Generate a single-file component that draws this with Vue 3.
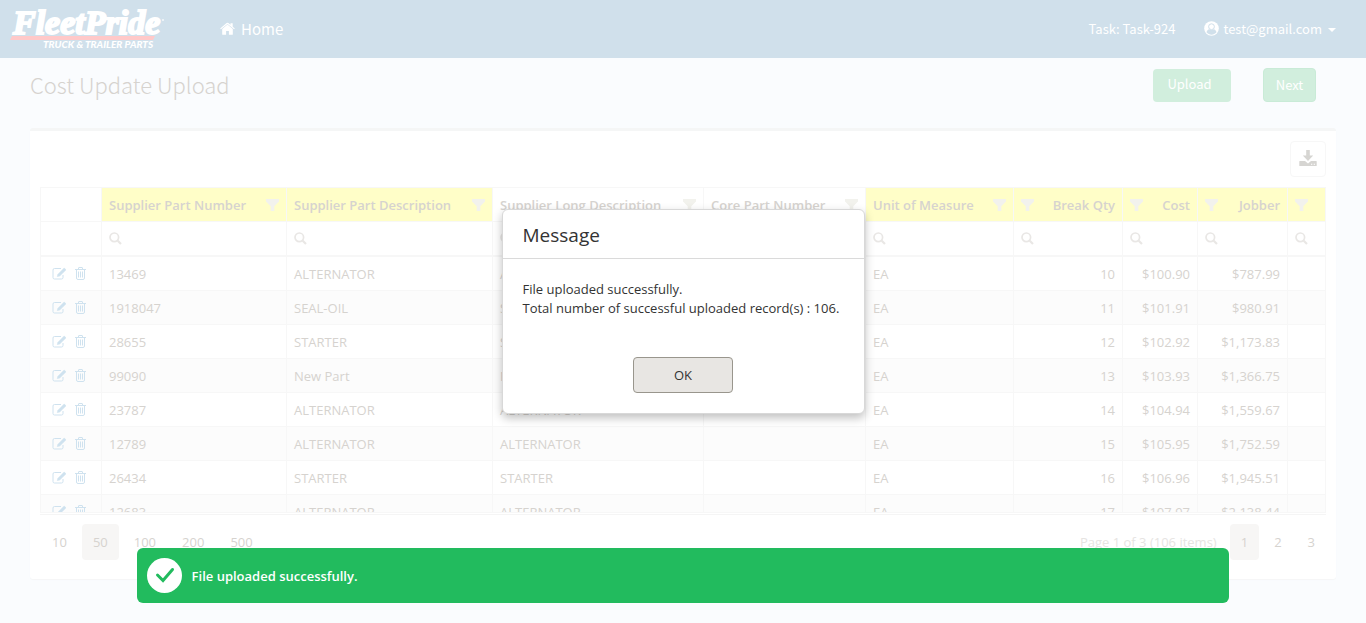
<script setup>
const columns = [
  { label: '', width: 61, hl: false, actions: true },
  { label: 'Supplier Part Number', key: 'part', width: 185, hl: true },
  { label: 'Supplier Part Description', key: 'desc', width: 206, hl: true },
  { label: 'Supplier Long Description', key: 'long', width: 211, hl: false },
  { label: 'Core Part Number', key: 'core', width: 162, hl: false },
  { label: 'Unit of Measure', key: 'uom', width: 148, hl: true },
  { label: 'Break Qty', key: 'qty', width: 109, hl: true, right: true },
  { label: 'Cost', key: 'cost', width: 75, hl: true, right: true },
  { label: 'Jobber', key: 'jobber', width: 90, hl: true, right: true },
  { label: '', key: 'extra', width: 38, hl: true, right: true },
]

const rows = [
  ['13469', 'ALTERNATOR', '10', '$100.90', '$787.99'],
  ['1918047', 'SEAL-OIL', '11', '$101.91', '$980.91'],
  ['28655', 'STARTER', '12', '$102.92', '$1,173.83'],
  ['99090', 'New Part', '13', '$103.93', '$1,366.75'],
  ['23787', 'ALTERNATOR', '14', '$104.94', '$1,559.67'],
  ['12789', 'ALTERNATOR', '15', '$105.95', '$1,752.59'],
  ['26434', 'STARTER', '16', '$106.96', '$1,945.51'],
  ['12683', 'ALTERNATOR', '17', '$107.97', '$2,138.44'],
].map(([part, desc, qty, cost, jobber]) => ({
  part, desc, long: desc, core: '', uom: 'EA', qty, cost, jobber, extra: '',
}))

const pageSizes = [10, 50, 100, 200, 500]
const pages = [1, 2, 3]
</script>

<template>
  <div class="app">
    <header class="topbar">
      <a class="logo" href="#" aria-label="FleetPride Truck &amp; Trailer Parts">
        <svg width="160" height="48" viewBox="0 0 160 48">
          <text class="logo-name" x="3" y="29">FleetPride</text>
          <path d="M2 31H145L143 35H0Z" fill="#ffc9c9" />
          <text class="logo-tag" x="33" y="43">TRUCK &amp; TRAILER PARTS</text>
          <circle cx="153" cy="15" r="1" fill="#f4f8fb" />
        </svg>
      </a>
      <a class="home" href="#">
        <svg width="15" height="13" viewBox="0 0 15 13" fill="#fff">
          <path d="M7.500 2.600 2.200 7v5.200q0 .5.500.5H6.100V9h2.800v3.700h3.400q.5 0 .5-.500V7Z" />
          <path d="M.2 6.500 6.600 1q.9-.7 1.800 0L10.500 2.800V1.200h2.200v3.500l2.100 1.800-.7.800L7.500 1.900.9 7.300Z" />
        </svg>
        <span>Home</span>
      </a>
      <span class="task">Task: Task-924</span>
      <button class="user" type="button">
        <svg width="15" height="15" viewBox="0 0 15 15">
          <circle cx="7.500" cy="7.500" r="7.300" fill="#fff" />
          <circle cx="7.500" cy="5.700" r="2.900" fill="none" stroke="#d0e0eb" stroke-width="1" />
          <path d="M2.500 11.300C3 9.400 4 8.700 5.200 8.300q2.300 1.400 4.600 0c1.200.4 2.200 1.100 2.700 3C9.800 14.400 5.200 14.400 2.500 11.300Z" fill="#d0e0eb" />
        </svg>
        <span>test@gmail.com</span>
        <svg class="caret" width="8" height="4" viewBox="0 0 8 4"><path d="M0 0H8L4 4Z" fill="#fff" /></svg>
      </button>
    </header>

    <div class="titlebar">
      <h1>Cost Update Upload</h1>
      <button class="btn upload" type="button">Upload</button>
      <button class="btn next" type="button">Next</button>
    </div>

    <main class="panel">
      <div class="toolbar">
        <button class="export" type="button" aria-label="Export">
          <svg width="18" height="17" viewBox="0 0 18 17" fill="#d6d5d2">
            <path d="M7.200 0h3.600v5.500h3.400L9 11 3.800 5.500h3.400Z" />
            <path d="M.8 11H6l3 2.500L12 11h5.200q.5 0 .5.500v4q0 .5-.5.500H.8q-.5 0-.5-.500v-4Q.3 11 .8 11Z" />
            <path d="M12 13.700h1.300v1H12Zm2.700 0H16v1h-1.300Z" fill="#fff" />
          </svg>
        </button>
      </div>

      <div class="grid">
        <div class="rows">
          <table>
            <colgroup>
              <col v-for="(c, i) in columns" :key="i" :style="{ width: c.width + 'px' }" />
            </colgroup>
            <thead>
              <tr>
                <th v-for="(c, i) in columns" :key="i" :class="{ hl: c.hl }" scope="col">
                  <div v-if="!c.actions" class="head" :class="{ right: c.right }">
                    <span>{{ c.label }}</span>
                    <svg width="13" height="12" viewBox="0 0 13 12">
                      <path d="M0 0H13V2.500L8.300 7.300V12H4.700V7.300L0 2.500Z" fill="#f2f2ed" />
                    </svg>
                  </div>
                </th>
              </tr>
              <tr class="filters">
                <td v-for="(c, i) in columns" :key="i">
                  <svg v-if="!c.actions" width="13" height="13" viewBox="0 0 13 13" fill="none" stroke="#e9e7e5">
                    <circle cx="5.300" cy="5.300" r="4.300" stroke-width="1.700" />
                    <path d="M8.500 8.500 12 12" stroke-width="2.200" />
                  </svg>
                </td>
              </tr>
            </thead>
            <tbody>
              <tr v-for="row in rows" :key="row.part">
                <td v-for="(c, i) in columns" :key="i" :class="{ num: c.right }">
                  <div v-if="c.actions" class="actions">
                    <button type="button" aria-label="Edit">
                      <svg width="15" height="13" viewBox="0 0 15 13" fill="none" stroke="#cfe2ef">
                        <path d="M9 1.500H2.500q-1.500 0-1.500 1.500v7.500Q1 12 2.500 12h7q1.500 0 1.500-1.500V8" />
                        <path d="M5.300 9.500 6 7.200 12.200 1 14 2.800 7.700 9Z" fill="#cfe2ef" stroke-width=".6" />
                      </svg>
                    </button>
                    <button type="button" aria-label="Delete">
                      <svg width="11" height="13" viewBox="0 0 11 13" fill="none" stroke="#cfe2ef">
                        <path d="M0 2.500H11M3.500 2.500V1Q3.500.5 4 .5H7Q7.500.5 7.500 1V2.500M1.500 2.500V11Q1.500 12.500 3 12.500H8Q9.500 12.500 9.500 11V2.500M3.500 4.500V10.500M5.500 4.500V10.500M7.500 4.500V10.500" />
                      </svg>
                    </button>
                  </div>
                  <template v-else>{{ row[c.key] }}</template>
                </td>
              </tr>
            </tbody>
          </table>
        </div>
      </div>

      <nav class="pager" aria-label="Pagination">
        <button v-for="s in pageSizes" :key="s" type="button" :class="{ on: s === 50 }">{{ s }}</button>
        <span class="info">Page 1 of 3 (106 items)</span>
        <button v-for="p in pages" :key="'p' + p" type="button" :class="{ on: p === 1 }">{{ p }}</button>
      </nav>
    </main>

    <div class="overlay">
      <section class="dialog" role="dialog" aria-modal="true" aria-labelledby="dlg-title">
        <h2 id="dlg-title">Message</h2>
        <p>File uploaded successfully.<br />Total number of successful uploaded record(s) : 106.</p>
        <button type="button">OK</button>
      </section>
    </div>

    <div class="toast" role="status">
      <svg width="35" height="35" viewBox="0 0 35 35">
        <circle cx="17.500" cy="17.500" r="17.500" fill="#fff" />
        <path d="M10.500 17 16 22.500 25.500 11.500" fill="none" stroke="#22bb5e" stroke-width="3" stroke-linecap="round" />
      </svg>
      <span>File uploaded successfully.</span>
    </div>
  </div>
</template>

<style>
body {
  margin: 0;
  background: #fafcfe;
}
</style>

<style scoped>
* {
  box-sizing: border-box;
}
.app {
  position: relative;
  height: 100vh;
  overflow: hidden;
  font-family: "Open Sans", "Noto Sans", sans-serif;
  font-size: 13px;
  color: #d6d3cf;
}
button {
  font: inherit;
  color: inherit;
  background: none;
  border: 0;
  padding: 0;
}
svg {
  display: block;
  flex: none;
}
.topbar {
  display: flex;
  align-items: center;
  height: 58px;
  padding: 0 30px 2px 10px;
  background: #d0e0eb;
  color: #fff;
  font-family: "Noto Sans CJK SC", sans-serif;
}
.logo {
  width: 210px;
  padding-top: 2px;
}
.logo-name {
  font: italic bold 34px "Liberation Serif", serif;
  fill: #fff;
  stroke: #fff;
  stroke-width: 2px;
}
.logo-tag {
  font: italic 900 10px Lato, sans-serif;
  fill: #fff;
}
.home {
  display: flex;
  align-items: center;
  gap: 6px;
  color: #fff;
  text-decoration: none;
  font-size: 15px;
}
.task {
  margin-left: auto;
  margin-right: 29px;
}
.user {
  display: flex;
  align-items: center;
  gap: 4px;
}
.caret {
  margin: 3px 0 0 2px;
}
.titlebar {
  display: flex;
  align-items: flex-start;
  height: 70px;
  padding: 10px 50px 0 30px;
  font-family: "Noto Sans CJK SC", sans-serif;
}
h1 {
  margin: 0 auto 0 0;
  font-size: 22px;
  font-weight: 300;
  line-height: 32px;
}
.btn {
  color: #fff;
  background: #d1eedd;
  border-radius: 4px;
}
.upload {
  width: 78px;
  height: 33px;
  margin-top: 1px;
  padding: 0 5px 5px 0;
}
.next {
  width: 53px;
  height: 34px;
  margin-left: 32px;
  padding-bottom: 2px;
  border: 1px solid #c9ebd7;
}
.panel {
  margin: 0 30px;
  padding: 10px 10px 19px;
  background: #fff;
  border-top: 3px solid #f5f6f6;
  border-radius: 3px;
  box-shadow: 0 1px 1px #f5f6f7;
}
.toolbar {
  display: flex;
  justify-content: flex-end;
  margin-bottom: 10px;
}
.export {
  display: grid;
  place-items: center;
  width: 36px;
  height: 36px;
  padding-bottom: 2px;
  border: 1px solid #f7f7f7;
  border-radius: 4px;
}
.grid {
  padding-bottom: 1px;
  border-bottom: 1px solid #f5f5f5;
}
.rows {
  height: 326px;
  overflow: hidden;
  border-bottom: 1px solid #f7f7f7;
}
table {
  width: 100%;
  table-layout: fixed;
  border-collapse: separate;
  border-spacing: 0;
  border-top: 1px solid #f7f7f7;
  border-left: 1px solid #f7f7f7;
}
th,
td {
  height: 34px;
  padding: 0 7px;
  border-right: 1px solid #f7f7f7;
  border-bottom: 1px solid #f7f7f7;
  text-align: left;
  white-space: nowrap;
}
.hl {
  background: #fffec8;
}
th {
  font-weight: 600;
}
.head {
  display: flex;
  align-items: center;
  justify-content: space-between;
}
.head.right {
  flex-direction: row-reverse;
}
.filters td {
  height: 35px;
  border-bottom-width: 2px;
}
tbody tr:nth-child(even) {
  background: #fcfcfc;
}
.num {
  text-align: right;
}
.actions {
  display: flex;
  align-items: center;
  gap: 8px;
  padding-left: 4px;
}
.pager {
  display: flex;
  align-items: center;
  gap: 4px;
  padding: 9px 0 0 1px;
}
.pager button {
  height: 36px;
  padding: 0 11px;
  border-radius: 4px;
}
.pager .on {
  background: #f7f6f5;
}
.info {
  margin-left: auto;
  margin-right: 9px;
  color: #e6e4e2;
}
.overlay {
  position: absolute;
  inset: 0;
  display: grid;
  place-items: center;
}
.dialog {
  min-width: 363px;
  padding-bottom: 20px;
  background: #fff;
  border: 1px solid #d8d8d8;
  border-radius: 6px;
  box-shadow: 0 4px 10px rgba(0, 0, 0, 0.25);
  color: #333;
}
.dialog h2 {
  margin: 0;
  padding: 2px 20px 0;
  border-bottom: 1px solid #dadada;
  font-size: 19px;
  font-weight: 400;
  line-height: 46px;
}
.dialog p {
  margin: 0;
  padding: 21px 20px 39px;
  line-height: 19px;
}
.dialog button {
  display: block;
  width: 100px;
  height: 36px;
  margin: 0 auto;
  background: #e8e6e3;
  border: 1px solid #99968d;
  border-radius: 4px;
}
.toast {
  position: absolute;
  left: 10%;
  right: 10%;
  bottom: 20px;
  display: flex;
  align-items: center;
  gap: 10px;
  height: 55px;
  padding: 0 10px;
  border-radius: 6px;
  background: #22bb5e;
  color: #fff;
  font-weight: 600;
}
</style>
